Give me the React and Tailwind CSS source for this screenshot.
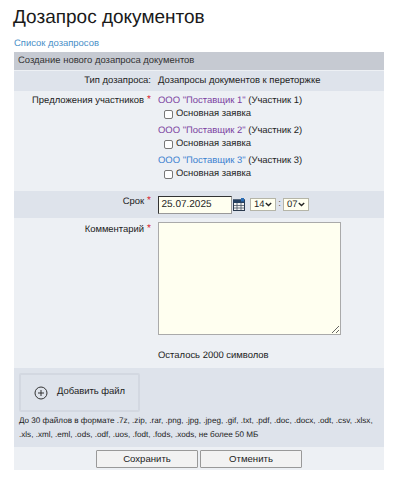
import React from "react";

const Star = () => <span className="text-[#d9232e] text-[10px] leading-[10px] align-[1px] ml-[3px]">*</span>;

function Offer({ color, n, mt }) {
  return (
    <div className={mt}>
      <div className="h-[14px] leading-[14px] whitespace-nowrap">
        <span className={color}>ООО "Поставщик {n}"</span> (Участник {n})
      </div>
      <div className="flex items-center h-[14px] -mt-[1px] ml-[6px]">
        <input type="checkbox" className="w-[9px] h-[9px] m-0 appearance-none border border-[#777] rounded-[2px] bg-white" />
        <span className="ml-[3px] leading-[14px]">Основная заявка</span>
      </div>
    </div>
  );
}

function CalendarIcon() {
  return (
    <svg width="12" height="13" viewBox="0 0 12 13" className="ml-[1px]">
      <rect x="0.5" y="2" width="11" height="10.5" fill="#f2f2f2" stroke="#2b3a4e" />
      <rect x="0" y="1.5" width="12" height="3.5" fill="#26405f" />
      <rect x="8" y="0" width="3" height="3.5" fill="#2b6db5" />
      <path d="M1 7.5h10M1 10h10M4 5v7M8 5v7" stroke="#4a5563" strokeWidth="0.8" />
    </svg>
  );
}

function Select({ value }) {
  return (
    <div className="w-[26px] h-[13px] border border-[#b5b5a8] bg-[#fffff0] flex items-center justify-between px-[3px] leading-[11px] text-[#222]">
      <span>{value}</span>
      <svg width="7" height="5" viewBox="0 0 7 5"><path d="M0.8 1l2.7 2.6L6.2 1" fill="none" stroke="#222" strokeWidth="1.4" /></svg>
    </div>
  );
}

const btn = "w-[102px] h-[18px] border border-[#999] rounded-[1px] bg-[#f2f2f2] leading-[14px] text-[#222] text-[9.6px]";

export default function App() {
  return (
    <div className="w-[400px] h-[487px] bg-white font-['Liberation_Sans',Arial,sans-serif] [text-rendering:geometricPrecision] text-[9.45px] text-[#222] overflow-hidden">
      <div className="pl-[13px] pt-[7px] text-[19px] leading-[21px] h-[37px] text-[#1a1a1a]">Дозапрос документов</div>
      <a className="block ml-[14px] h-[14px] leading-[14px] text-[#4a90c8]">Список дозапросов</a>
      <div className="w-[370px] ml-[14px] bg-[#edf0f4] mt-[1px]">
        <div className="h-[18px] leading-[17px] pl-[4px] bg-[#c6cad2] text-[#333]">Создание нового дозапроса документов</div>
        <div className="mt-[1px] h-[20px] flex items-center bg-[#dee3eb]">
          <div className="w-[137px] text-right">Тип дозапроса:</div>
          <div className="ml-[7px]">Дозапросы документов к переторжке</div>
        </div>
        <div className="flex h-[100px] pt-[3px]">
          <div className="w-[137px] text-right leading-[14px] whitespace-nowrap">Предложения участников<Star /></div>
          <div className="ml-[7px]">
            <Offer n={1} color="text-[#7a3ea0]" />
            <Offer n={2} color="text-[#7a3ea0]" mt="mt-[3px]" />
            <Offer n={3} color="text-[#3a7fd0]" mt="mt-[3px]" />
          </div>
        </div>
        <div className="h-[27px] flex items-center bg-[#dee3eb]">
          <div className="w-[137px] text-right pb-[4px]">Срок<Star /></div>
          <div className="ml-[7px] flex items-center">
            <div className="w-[74px] h-[18px] border border-[#333] border-r-[#999] border-b-[#999] bg-[#fffff0] flex items-center pl-[2.5px] text-[10px]">25.07.2025</div>
            <CalendarIcon />
            <div className="ml-[5px] flex items-center gap-[2px] text-[#555]">
              <Select value="14" />
              <span className="w-[3px] text-center">:</span>
              <Select value="07" />
            </div>
          </div>
        </div>
        <div className="flex h-[150px] pt-[4px]">
          <div className="w-[137px] text-right leading-[16px]">Комментарий<Star /></div>
          <div className="ml-[7px]">
            <textarea readOnly className="block w-[183px] h-[113px] border border-[#aaa] bg-[#fffff0] resize m-0 outline-none" />
            <div className="mt-[14px] leading-[13px]">Осталось 2000 символов</div>
          </div>
        </div>
        <div className="h-[79px] bg-[#dee3eb] pt-[5px] pl-[5px]">
          <div className="w-[121px] h-[39px] border-2 border-[#d3d8e1] rounded-[2px] flex items-center pl-[13px]">
            <svg width="14" height="14" viewBox="0 0 14 14"><circle cx="7" cy="7" r="6" fill="none" stroke="#333" strokeWidth="1" /><path d="M7 4v6M4 7h6" stroke="#333" strokeWidth="1" /></svg>
            <span className="ml-[9px]">Добавить файл</span>
          </div>
          <div className="mt-[2px] text-[8.12px] leading-[13.5px] text-[#222] whitespace-nowrap">
            До 30 файлов в формате .7z, .zip, .rar, .png, .jpg, .jpeg, .gif, .txt, .pdf, .doc, .docx, .odt, .csv, .xlsx,<br />.xls, .xml, .eml, .ods, .odf, .uos, .fodt, .fods, .xods, не более 50 МБ
          </div>
        </div>
        <div className="h-[23px] flex justify-center gap-[2px] pt-[3px]">
          <button className={btn}>Сохранить</button>
          <button className={btn}>Отменить</button>
        </div>
      </div>
    </div>
  );
}
